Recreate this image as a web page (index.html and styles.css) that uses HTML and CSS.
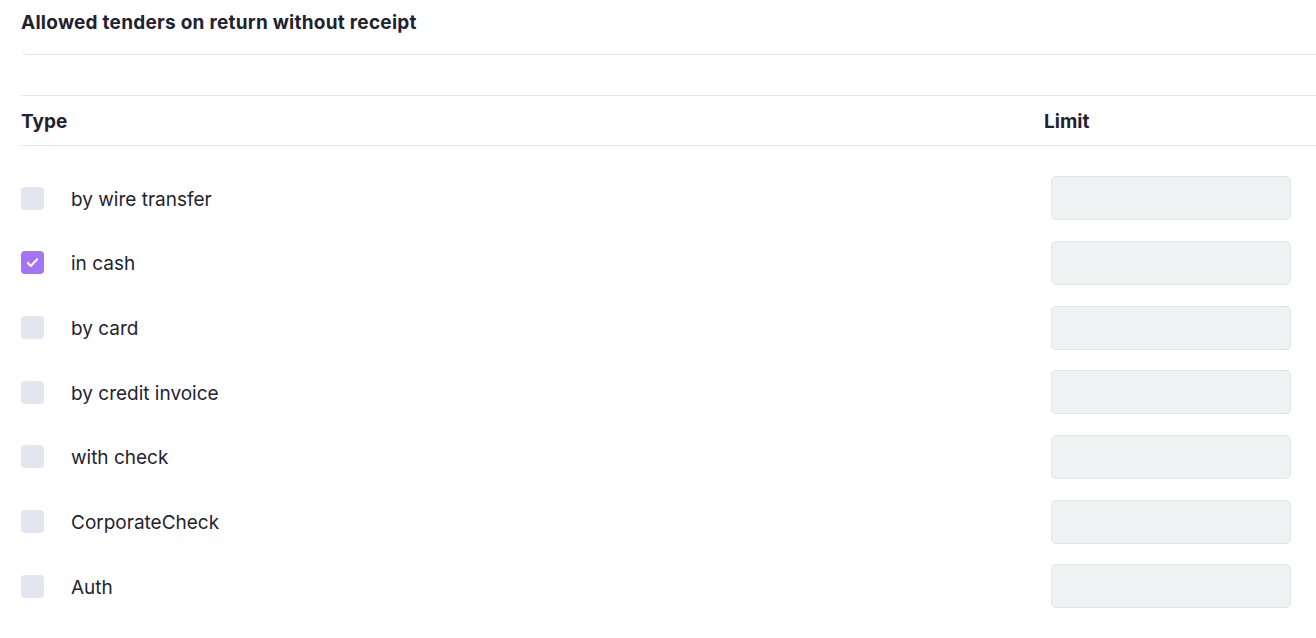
FILE: index.html
```html
<!DOCTYPE html>
<html lang="en">
<head>
  <meta charset="UTF-8" />
  <title>Allowed tenders</title>
  <link rel="stylesheet" href="styles.css">
</head>
<body>
  <div class="card">
    <div class="card-title">Allowed tenders on return without receipt</div>
    <div class="toolbar"></div>
    <div class="head">
      <div class="col-type">Type</div>
      <div class="col-limit">Limit</div>
    </div>
    <div class="rows">
      <div class="row">
        <div class="col-type"><span class="check"></span><span class="label">by wire transfer</span></div>
        <div class="col-limit"><input class="limit" type="text"></div>
      </div>
      <div class="row">
        <div class="col-type">
          <span class="check checked">
            <svg width="15" height="15" viewBox="0 0 16 16"><path d="M3 8.5l3.2 3.2L13 4.5" fill="none" stroke="#fff" stroke-width="2.2" stroke-linecap="round" stroke-linejoin="round"/></svg>
          </span>
          <span class="label">in cash</span>
        </div>
        <div class="col-limit"><input class="limit" type="text"></div>
      </div>
      <div class="row">
        <div class="col-type"><span class="check"></span><span class="label">by card</span></div>
        <div class="col-limit"><input class="limit" type="text"></div>
      </div>
      <div class="row">
        <div class="col-type"><span class="check"></span><span class="label">by credit invoice</span></div>
        <div class="col-limit"><input class="limit" type="text"></div>
      </div>
      <div class="row">
        <div class="col-type"><span class="check"></span><span class="label">with check</span></div>
        <div class="col-limit"><input class="limit" type="text"></div>
      </div>
      <div class="row">
        <div class="col-type"><span class="check"></span><span class="label">CorporateCheck</span></div>
        <div class="col-limit"><input class="limit" type="text"></div>
      </div>
      <div class="row">
        <div class="col-type"><span class="check"></span><span class="label">Auth</span></div>
        <div class="col-limit"><input class="limit" type="text"></div>
      </div>
    </div>
  </div>
</body>
</html>
```

FILE: styles.css
```css
* {
  margin: 0;
  padding: 0;
  box-sizing: border-box;
}
body {
  font-family: 'Inter', 'Noto Sans', sans-serif;
  color: #1f2330;
  background: #fff;
  padding-left: 21px;
  overflow: hidden;
}
/* Card header */
.card-title {
  height: 55px;
  padding-top: 12px;
  font-size: 19px;
  line-height: 22px;
  font-weight: 700;
  letter-spacing: 0.25px;
  border-bottom: 1px solid #e6e7ec;
  border-bottom-left-radius: 6px;
}
.toolbar {
  height: 40px;
}
/* Table */
.head {
  display: flex;
  height: 51px;
  padding-top: 2px;
  border-top: 1px solid #e6e7ec;
  border-bottom: 1px solid #e6e7ec;
  align-items: center;
  font-size: 19px;
  font-weight: 700;
}
.col-type {
  width: 1023px;
  display: flex;
  align-items: center;
}
.col-limit {
  flex: 1;
}
.rows {
  padding-top: 20px;
}
.row {
  display: flex;
  align-items: center;
  height: 64.67px;
}
.check {
  width: 23px;
  height: 23px;
  border-radius: 4px;
  background: #e2e6ee;
  display: flex;
  align-items: center;
  justify-content: center;
}
.check.checked {
  background: #a474f5;
}
.label {
  margin-left: 27px;
  padding-top: 3px;
  font-size: 19px;
  line-height: 24px;
}
.limit {
  display: block;
  margin-left: 7px;
  width: 240px;
  height: 44px;
  background: #f0f1f3;
  border: 1px solid #e3e5ea;
  border-radius: 5px;
  outline: none;
}
```
